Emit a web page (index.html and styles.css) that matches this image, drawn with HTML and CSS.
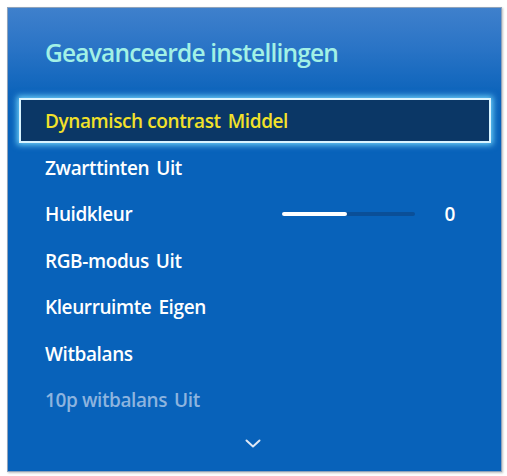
FILE: index.html
```html
<!DOCTYPE html>
<html>
<head>
<meta charset="utf-8">
<link rel="stylesheet" href="styles.css">
</head>
<body>
<div class="panel">
  <div class="title">Geavanceerde instellingen</div>
  <ul class="menu">
    <li class="row selected"><span>Dynamisch contrast</span><span class="val">Middel</span></li>
    <li class="row"><span>Zwarttinten</span><span class="val">Uit</span></li>
    <li class="row"><span>Huidkleur</span>
      <div class="slider"><div class="fill" style="width:49%"></div></div>
      <span class="num">0</span></li>
    <li class="row"><span>RGB-modus</span><span class="val">Uit</span></li>
    <li class="row"><span>Kleurruimte</span><span class="val">Eigen</span></li>
    <li class="row"><span>Witbalans</span></li>
    <li class="row dim"><span>10p witbalans</span><span class="val">Uit</span></li>
  </ul>
  <div class="more">
    <svg width="16" height="9" viewBox="0 0 16 9"><path d="M1.5 1.5 L8 7.5 L14.5 1.5" fill="none" stroke="#dfe8f5" stroke-width="2" stroke-linecap="round" stroke-linejoin="round"/></svg>
  </div>
</div>
</body>
</html>
```
FILE: styles.css
```css
html, body {
  margin: 0;
  padding: 0;
  background: #ffffff;
}
body {
  padding: 7px 5px 5px 7px;
  font-family: "Open Sans", "DejaVu Sans", sans-serif;
}
.panel {
  box-sizing: border-box;
  width: 495px;
  height: 465px;
  border: 1px solid #8fa3bb;
  background: linear-gradient(to bottom, #3f80cc 0px, #2a74c6 40px, #0d64bb 85px, #0862ba 110px, #0862ba 100%);
  box-shadow: 1px 1px 2px rgba(0,0,0,0.25);
  display: flex;
  flex-direction: column;
}
.title {
  color: #a2f1e6;
  font-size: 24.5px;
  font-weight: 600;
  letter-spacing: -0.8px;
  padding: 27px 0 0 37px;
  height: 63px;
  line-height: 36px;
}
.menu {
  list-style: none;
  margin: 0;
  padding: 0 10px 0 11px;
}
.row {
  height: 46.5px;
  display: flex;
  align-items: center;
  padding-left: 26px;
  color: #ffffff;
  font-size: 19px;
  font-weight: 600;
  letter-spacing: -0.4px;
  box-sizing: border-box;
}
.row .val {
  margin-left: 7px;
}
.selected {
  height: 45px;
  margin-bottom: 1.5px;
  color: #f2e12a;
  background: #0b3766;
  border: 2px solid #d9f4ff;
  box-shadow: 0 0 6px 2px rgba(120, 220, 255, 0.9);
  padding-left: 24px;
}
.dim {
  color: #8db4df;
}
.slider {
  margin-left: auto;
  width: 133px;
  height: 4px;
  background: #0a4f98;
  border-radius: 2px;
  display: flex;
}
.fill {
  background: #ffffff;
  border-radius: 2px;
  height: 100%;
}
.num {
  width: 66px;
  text-align: right;
  padding-right: 36px;
  box-sizing: border-box;
  margin-left: 10px;
}
.more {
  display: flex;
  justify-content: center;
  padding-top: 15px;
  padding-right: 3px;
}
```
